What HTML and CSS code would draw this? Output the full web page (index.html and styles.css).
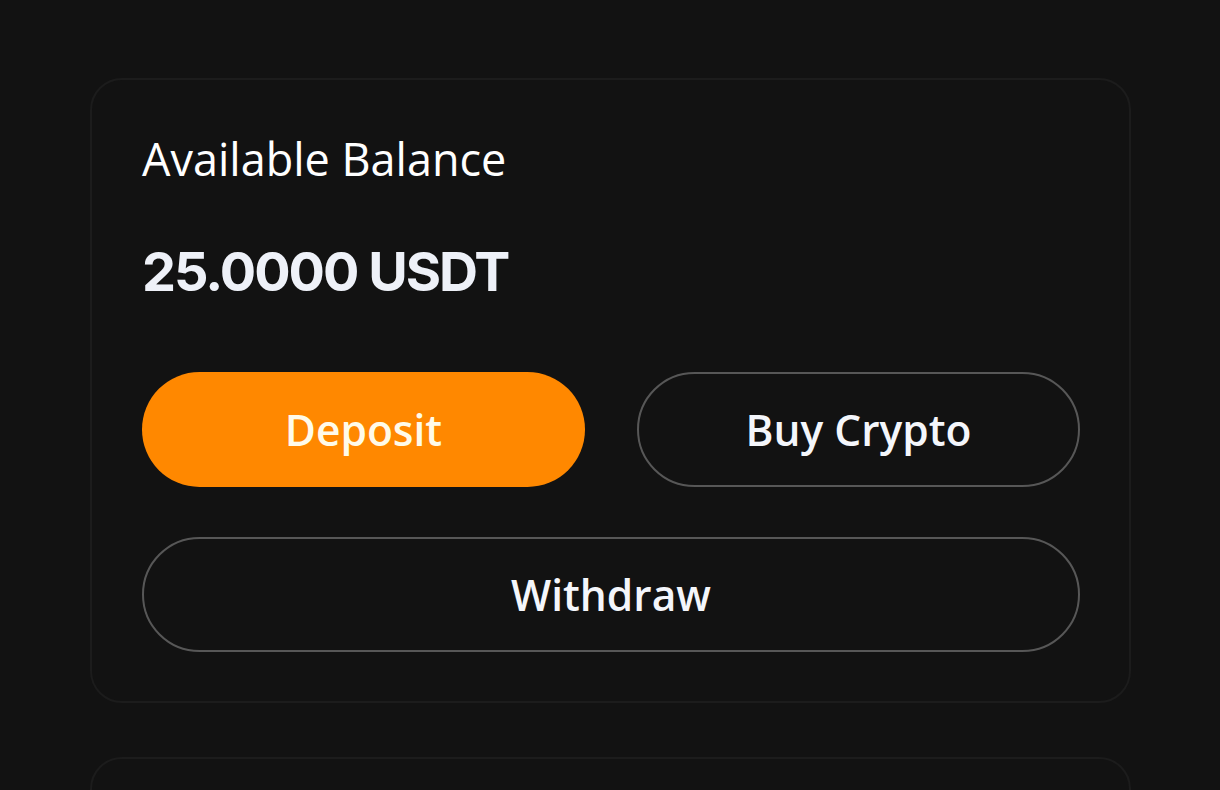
FILE: index.html
```html
<!DOCTYPE html>
<html lang="en">

<head>
    <meta charset="UTF-8">
    <meta name="viewport" content="width=device-width, initial-scale=1.0">
    <title>Wallet</title>

    <link rel="stylesheet" href="styles.css">
</head>

<body>
    <main class="wallet">
        <section class="card balance-card">
            <h2 class="balance-label">Available Balance</h2>
            <p class="balance-amount">25.0000 USDT</p>
            <div class="actions">
                <button class="btn btn-primary">Deposit</button>
                <button class="btn btn-outline">Buy Crypto</button>
                <button class="btn btn-outline btn-wide">Withdraw</button>
            </div>
        </section>

        <section class="card next-card"></section>
    </main>
</body>

</html>
```

FILE: styles.css
```css
html,
body {
    height: 100%;
}

body {
    font-family: 'Open Sans', 'Noto Sans', sans-serif;
    background-color: #121212;
    color: #f4f6fb;
    margin: 0;
    overflow: hidden;
}

.wallet {
    display: flex;
    flex-direction: column;
    gap: 54px;
    padding: 78px 89px 0 90px;
}

.card {
    border: 2px solid #1c1c1c;
    border-radius: 32px;
    padding: 51px 49px 49px 50px;
}

.balance-label {
    margin: 0;
    font-size: 45px;
    line-height: 56px;
    font-weight: 400;
    color: #ffffff;
}

.balance-amount {
    margin: 53px 0 0;
    font-family: 'Inter', sans-serif;
    font-size: 54px;
    line-height: 64px;
    font-weight: 700;
    letter-spacing: -2px;
    color: #eef1f8;
}

.actions {
    margin-top: 68px;
    display: grid;
    grid-template-columns: 1fr 1fr;
    gap: 50px 52px;
}

.btn {
    height: 115px;
    border-radius: 58px;
    font-family: 'Open Sans', sans-serif;
    font-size: 42.5px;
    font-weight: 600;
    cursor: pointer;
}

.btn-primary {
    background-color: #ff8800;
    border: none;
    color: #fffbea;
}

.btn-outline {
    background-color: transparent;
    border: 2px solid #575757;
    color: #f4f6fb;
}

.btn-wide {
    grid-column: 1 / -1;
}

.next-card {
    height: 120px;
}
```
